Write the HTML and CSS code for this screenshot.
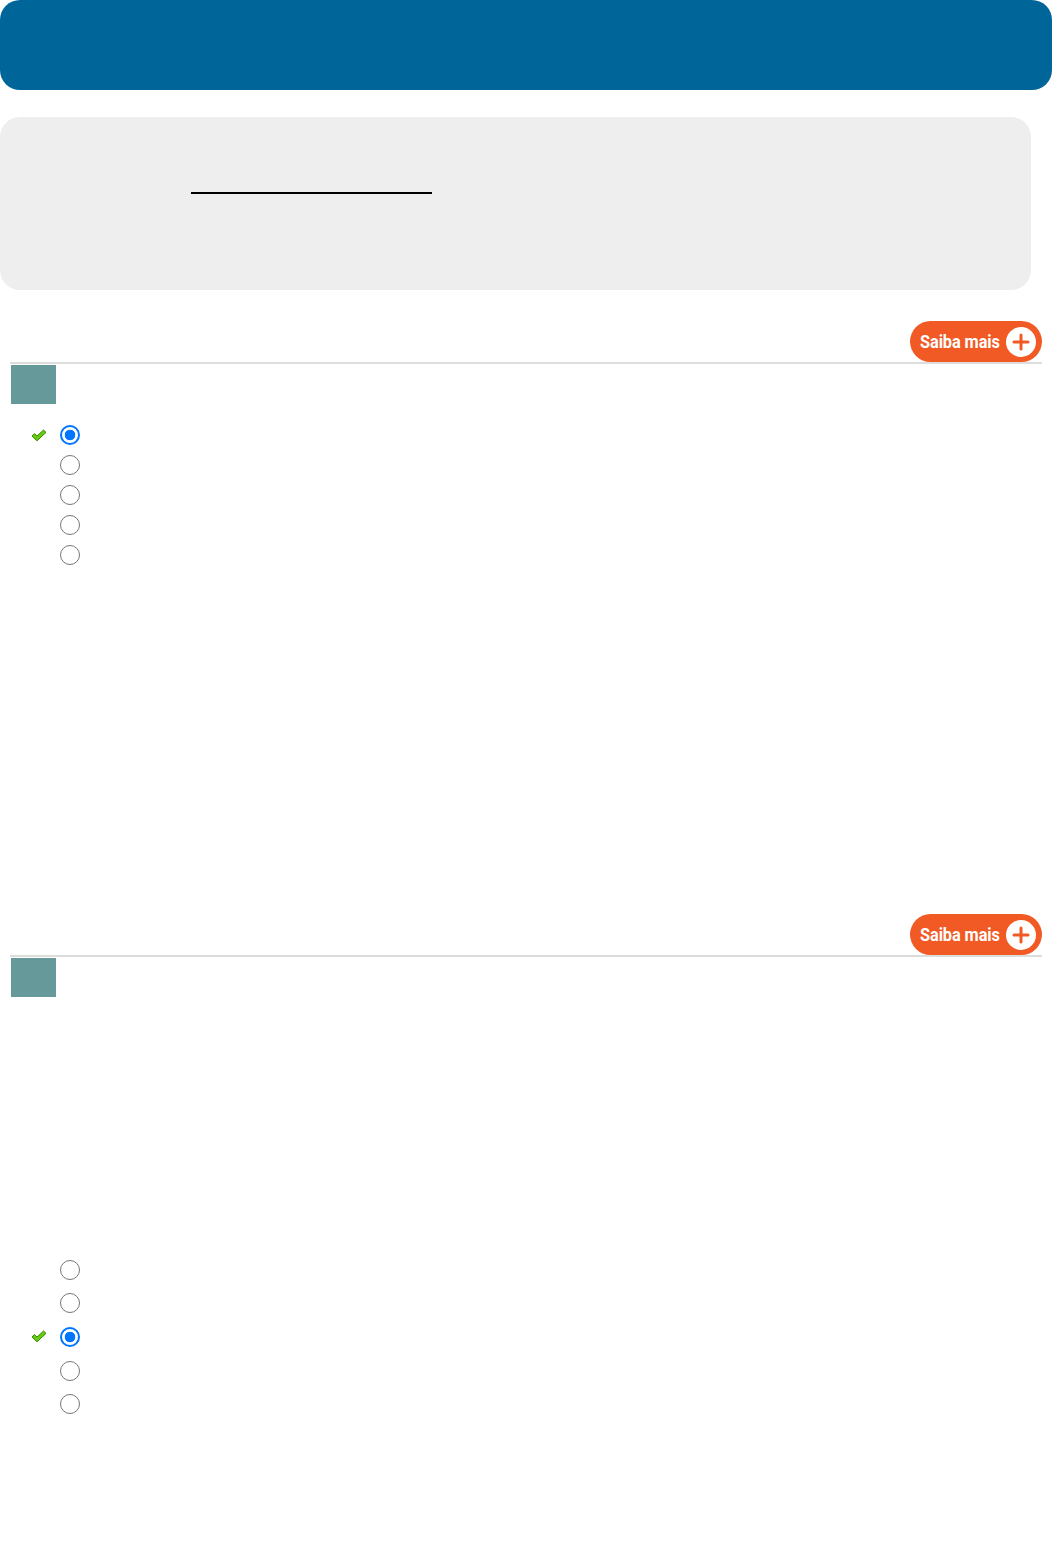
FILE: index.html
```html
<!DOCTYPE html>
<html lang="pt">
<head>
<meta charset="utf-8">
<title>Questões</title>
<link rel="stylesheet" href="styles.css">
</head>
<body>
<header class="topbar"></header>

<section class="intro">
  <span class="blank-line"></span>
</section>

<section class="question q1">
  <div class="q-head">
    <a class="saiba" href="#"><span class="label">Saiba mais</span><span class="plus"><svg viewBox="0 0 30 30" width="30" height="30"><path d="M15 8v14M8 15h14" stroke="#f15a24" stroke-width="3" stroke-linecap="round"/></svg></span></a>
  </div>
  <div class="q-num"></div>
  <ul class="options">
    <li class="opt"><span class="mark"><svg viewBox="0 0 16 13" width="16" height="13"><polygon points="1,7 3.6,4.6 6,7 12.6,1 15,3.4 6,11.8" fill="#6c1" stroke="#3a8a00" stroke-width="1" stroke-linejoin="round"/></svg></span><input type="radio" name="q1" checked></li>
    <li class="opt"><span class="mark"></span><input type="radio" name="q1"></li>
    <li class="opt"><span class="mark"></span><input type="radio" name="q1"></li>
    <li class="opt"><span class="mark"></span><input type="radio" name="q1"></li>
    <li class="opt"><span class="mark"></span><input type="radio" name="q1"></li>
  </ul>
  <div class="q-after"></div>
</section>

<section class="question q2">
  <div class="q-head">
    <a class="saiba" href="#"><span class="label">Saiba mais</span><span class="plus"><svg viewBox="0 0 30 30" width="30" height="30"><path d="M15 8v14M8 15h14" stroke="#f15a24" stroke-width="3" stroke-linecap="round"/></svg></span></a>
  </div>
  <div class="q-num"></div>
  <div class="q-stem"></div>
  <ul class="options tall">
    <li class="opt"><span class="mark"></span><input type="radio" name="q2"></li>
    <li class="opt"><span class="mark"></span><input type="radio" name="q2"></li>
    <li class="opt"><span class="mark"><svg viewBox="0 0 16 13" width="16" height="13"><polygon points="1,7 3.6,4.6 6,7 12.6,1 15,3.4 6,11.8" fill="#6c1" stroke="#3a8a00" stroke-width="1" stroke-linejoin="round"/></svg></span><input type="radio" name="q2" checked></li>
    <li class="opt"><span class="mark"></span><input type="radio" name="q2"></li>
    <li class="opt"><span class="mark"></span><input type="radio" name="q2"></li>
  </ul>
</section>
</body>
</html>
```

FILE: styles.css
```css
html, body {
  margin: 0;
  padding: 0;
  background: #fff;
  font-family: "Liberation Sans", Arial, sans-serif;
}

body {
  width: 1052px;
}

.topbar {
  display: block;
  height: 90px;
  background: #006699;
  border-radius: 20px;
}

.intro {
  margin-top: 27px;
  width: 1031px;
  height: 173px;
  box-sizing: border-box;
  padding: 75px 0 0 191px;
  background: #eeeeee;
  border-radius: 20px;
}

.blank-line {
  display: block;
  width: 241px;
  height: 2px;
  background: #000;
}

.question {
  display: flex;
  flex-direction: column;
}

.q1 {
  margin-top: 31px;
}

.q-head {
  margin: 0 10px;
  display: flex;
  justify-content: flex-end;
  border-bottom: 2px solid #dddddd;
}

.saiba {
  display: flex;
  align-items: center;
  height: 41px;
  width: 132px;
  flex: 0 0 132px;
  box-sizing: border-box;
  padding: 0 6px 0 10px;
  border-radius: 21px;
  background: #f15a24;
  color: #fff;
  text-decoration: none;
}

.label {
  flex: 1 1 0;
  min-width: 0;
  white-space: nowrap;
  font-family: "Roboto", "Liberation Sans", sans-serif;
  font-weight: bold;
  font-size: 19px;
  letter-spacing: -0.1px;
  transform: scaleX(0.86);
  transform-origin: left center;
}

.plus {
  display: flex;
  flex: 0 0 30px;
  width: 30px;
  height: 30px;
  border-radius: 50%;
  background: #fff;
}

.q-num {
  margin: 1px 0 0 11px;
  width: 45px;
  height: 39px;
  background: #669999;
}

.options {
  list-style: none;
  margin: 16px 0 0;
  padding: 0;
}

.opt {
  display: flex;
  align-items: center;
  height: 30px;
  padding-left: 31px;
}

.tall .opt {
  height: 33.6px;
}

.mark {
  display: inline-flex;
  align-items: center;
  width: 16px;
  height: 13px;
  margin-right: 13px;
}

.opt input {
  appearance: none;
  -webkit-appearance: none;
  box-sizing: border-box;
  width: 20px;
  height: 20px;
  margin: 0;
  border: 1.5px solid #767676;
  border-radius: 50%;
  background: #fff;
}

.opt input:checked {
  border: 2px solid #0075ff;
  background: radial-gradient(circle, #0075ff 0 5px, #fff 5.6px);
}

.q-after {
  height: 344px;
}

.q2 .options {
  margin-top: 0;
}

.q-stem {
  height: 256px;
}
```
